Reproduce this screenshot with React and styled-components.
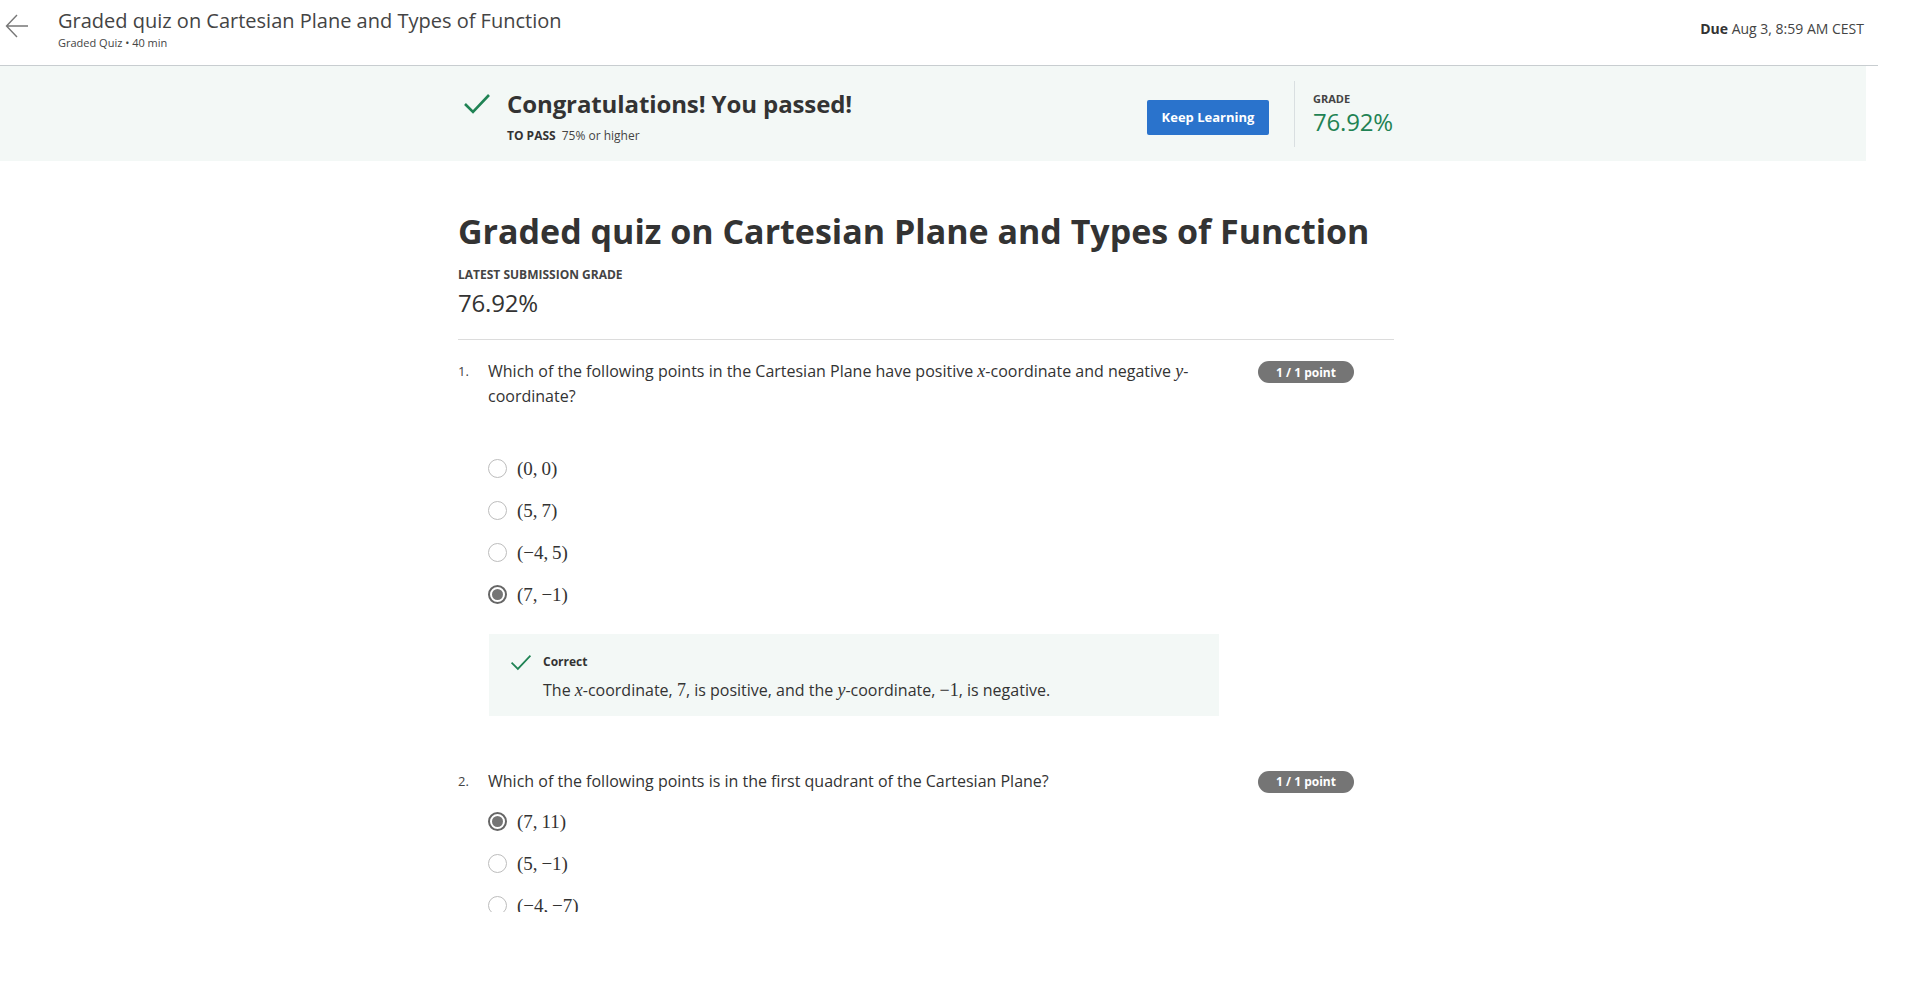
import styled, { createGlobalStyle } from "styled-components";

const GlobalStyle = createGlobalStyle`
  body {
    margin: 0;
    background: #fff;
    font-family: "Open Sans", "Noto Sans", sans-serif;
    color: #1f1f1f;
  }
`;

const Page = styled.div`
  width: 1878px;
  height: 912px;
  overflow: hidden;
  display: flex;
  flex-direction: column;
`;

const Header = styled.header`
  height: 65px;
  flex-shrink: 0;
  display: flex;
  align-items: flex-start;
  border-bottom: 1px solid #c8cdd0;
  padding-right: 14px;
`;

const BackButton = styled.button`
  width: 58px;
  height: 52px;
  border: none;
  background: none;
  padding: 0 0 0 5px;
  display: flex;
  align-items: center;
  cursor: pointer;
`;

const HeaderTitles = styled.div`
  flex: 1;
  padding-top: 7px;
`;

const HeaderTitle = styled.div`
  font-size: 20px;
  line-height: 28px;
  color: #444;
`;

const HeaderSub = styled.div`
  font-size: 11px;
  line-height: 16px;
  color: #444;
`;

const Due = styled.div`
  padding-top: 19px;
  font-size: 14px;
  line-height: 20px;
  color: #444;
  b {
    font-weight: 700;
    color: #333;
  }
`;

const Main = styled.main`
  width: 1866px;
  flex: 1;
  overflow: hidden;
`;

const Banner = styled.section`
  height: 95px;
  background: #f3f8f6;
  display: flex;
  align-items: center;
`;

const Column = styled.div`
  width: 936px;
  margin-left: 458px;
`;

const BannerRow = styled(Column)`
  display: flex;
  align-items: center;
`;

const PassBlock = styled.div`
  flex: 1;
  display: flex;
  align-items: flex-start;
  padding: 5px 0 0 5px;
`;

const PassIcon = styled.div`
  width: 28px;
  height: 32px;
  margin-right: 16px;
  display: flex;
  align-items: center;
`;

const PassTitle = styled.div`
  font-size: 24px;
  line-height: 32px;
  font-weight: 700;
  color: #333;
  letter-spacing: -0.1px;
`;

const PassSub = styled.div`
  margin-top: 7px;
  font-size: 12px;
  line-height: 18px;
  color: #444;
  b {
    font-weight: 700;
    margin-right: 6px;
    color: #333;
  }
`;

const PrimaryButton = styled.button`
  width: 122px;
  height: 35px;
  margin-top: 7px;
  border: none;
  border-radius: 2px;
  background: #2a73cc;
  color: #fff;
  font-family: inherit;
  font-size: 13px;
  font-weight: 700;
  cursor: pointer;
`;

const Divider = styled.div`
  width: 1px;
  height: 66px;
  background: #d9dfe1;
  margin: 0 18px 0 25px;
`;

const GradeBlock = styled.div`
  width: 81px;
`;

const SmallLabel = styled.div`
  font-size: ${(p) => (p.$big ? 12 : 11)}px;
  line-height: 16px;
  font-weight: 700;
  color: #444;
`;

const GradeValue = styled.div`
  font-size: 24px;
  line-height: 30px;
  color: ${(p) => (p.$green ? "#1f8354" : "#333")};
  letter-spacing: -0.2px;
`;

const Content = styled(Column)`
  padding-top: 50px;
`;

const H1 = styled.h1`
  margin: 0 0 16px;
  font-size: 34px;
  line-height: 40px;
  font-weight: 700;
  color: #333;
`;

const Rule = styled.hr`
  margin: 21px 0 0;
  border: none;
  border-top: 1px solid #dcdcdc;
`;

const Question = styled.div`
  padding-top: ${(p) => p.$top}px;
`;

const QuestionRow = styled.div`
  display: flex;
  align-items: flex-start;
  padding-right: 40px;
`;

const QNum = styled.div`
  width: 30px;
  font-size: 13px;
  line-height: 25px;
  color: #444;
`;

const QText = styled.div`
  flex: 1;
  font-size: 16px;
  line-height: 25px;
  color: #333;
`;

const Badge = styled.div`
  margin-left: 30px;
  margin-top: 2px;
  width: 96px;
  height: 22px;
  border-radius: 11px;
  background: #757575;
  color: #fff;
  font-size: 12px;
  font-weight: 700;
  display: flex;
  align-items: center;
  justify-content: center;
`;

const Options = styled.div`
  margin-top: ${(p) => p.$gap}px;
  padding-left: 30px;
`;

const Option = styled.label`
  height: 42px;
  display: flex;
  align-items: center;
`;

const Radio = styled.span`
  width: 19px;
  height: 19px;
  box-sizing: border-box;
  border-radius: 50%;
  border: ${(p) => (p.$checked ? "2px solid #666" : "1.5px solid #bdbdbd")};
  margin-right: 10px;
  display: flex;
  align-items: center;
  justify-content: center;
  &::after {
    content: "";
    display: ${(p) => (p.$checked ? "block" : "none")};
    width: 11px;
    height: 11px;
    border-radius: 50%;
    background: #757575;
  }
`;

const MathText = styled.span`
  font-family: "Liberation Serif", "DejaVu Serif", serif;
  font-size: ${(p) => (p.$inline ? 18 : 19)}px;
  line-height: 1;
  color: #333;
  i {
    font-style: italic;
  }
`;

const Feedback = styled.div`
  margin: 19px 0 0 31px;
  width: 730px;
  box-sizing: border-box;
  background: #f3f8f6;
  padding: 20px 20px 14px 21px;
  display: grid;
  grid-template-columns: 22px 1fr;
  column-gap: 11px;
  row-gap: 7px;
`;

const FeedbackLabel = styled.div`
  font-size: 12px;
  line-height: 16px;
  font-weight: 700;
  color: #333;
`;

const FeedbackText = styled.div`
  grid-column: 2;
  font-size: 16px;
  line-height: 24px;
  color: #333;
`;

const Check = ({ size = 28, stroke = 2.6 }) => (
  <svg width={size} height={size * 0.75} viewBox="0 0 28 21" fill="none">
    <path d="M2 11 L10 19 L26 2" stroke="#1f8354" strokeWidth={stroke} />
  </svg>
);

const M = ({ children }) => <MathText $inline>{children}</MathText>;

const questions = [
  {
    n: 1,
    gap: 38,
    text: (
      <>
        Which of the following points in the Cartesian Plane have positive{" "}
        <M>
          <i>x</i>
        </M>
        -coordinate and negative{" "}
        <M>
          <i>y</i>
        </M>
        -coordinate?
      </>
    ),
    options: ["(0,\u20090)", "(5,\u20097)", "(\u22124,\u20095)", "(7,\u2009\u22121)"],
    checked: 3,
    feedback: true,
  },
  {
    n: 2,
    gap: 7,
    text: <>Which of the following points is in the first quadrant of the Cartesian Plane?</>,
    options: ["(7,\u200911)", "(5,\u2009\u22121)", "(\u22124,\u2009\u22127)"],
    checked: 0,
  },
];

export default function App() {
  return (
    <>
      <GlobalStyle />
      <Page>
        <Header>
          <BackButton aria-label="Back">
            <svg width="24" height="26" viewBox="0 0 24 26" fill="none">
              <path d="M23 13 H2 M12 2 L1.5 13 L12 24" stroke="#777" strokeWidth="1.4" />
            </svg>
          </BackButton>
          <HeaderTitles>
            <HeaderTitle>Graded quiz on Cartesian Plane and Types of Function</HeaderTitle>
            <HeaderSub>Graded Quiz • 40 min</HeaderSub>
          </HeaderTitles>
          <Due>
            <b>Due</b> Aug 3, 8:59 AM CEST
          </Due>
        </Header>
        <Main>
          <Banner>
            <BannerRow>
              <PassBlock>
                <PassIcon>
                  <Check />
                </PassIcon>
                <div>
                  <PassTitle>Congratulations! You passed!</PassTitle>
                  <PassSub>
                    <b>TO PASS</b>75% or higher
                  </PassSub>
                </div>
              </PassBlock>
              <PrimaryButton>Keep Learning</PrimaryButton>
              <Divider />
              <GradeBlock>
                <SmallLabel>GRADE</SmallLabel>
                <GradeValue $green>76.92%</GradeValue>
              </GradeBlock>
            </BannerRow>
          </Banner>
          <Content>
            <H1>Graded quiz on Cartesian Plane and Types of Function</H1>
            <SmallLabel $big>LATEST SUBMISSION GRADE</SmallLabel>
            <GradeValue style={{ marginTop: 5 }}>76.92%</GradeValue>
            <Rule />
            {questions.map((q, qi) => (
              <Question key={q.n} $top={qi === 0 ? 19 : 53}>
                <QuestionRow>
                  <QNum>{q.n}.</QNum>
                  <QText>{q.text}</QText>
                  <Badge>1 / 1 point</Badge>
                </QuestionRow>
                <Options $gap={q.gap}>
                  {q.options.map((o, i) => (
                    <Option key={o}>
                      <Radio $checked={i === q.checked} />
                      <MathText>{o}</MathText>
                    </Option>
                  ))}
                </Options>
                {q.feedback && (
                  <Feedback>
                    <Check size={22} stroke={2.2} />
                    <FeedbackLabel>Correct</FeedbackLabel>
                    <FeedbackText>
                      The{" "}
                      <M>
                        <i>x</i>
                      </M>
                      -coordinate, <M>7</M>, is positive, and the{" "}
                      <M>
                        <i>y</i>
                      </M>
                      -coordinate, <M>−1</M>, is negative.
                    </FeedbackText>
                  </Feedback>
                )}
              </Question>
            ))}
          </Content>
        </Main>
      </Page>
    </>
  );
}
